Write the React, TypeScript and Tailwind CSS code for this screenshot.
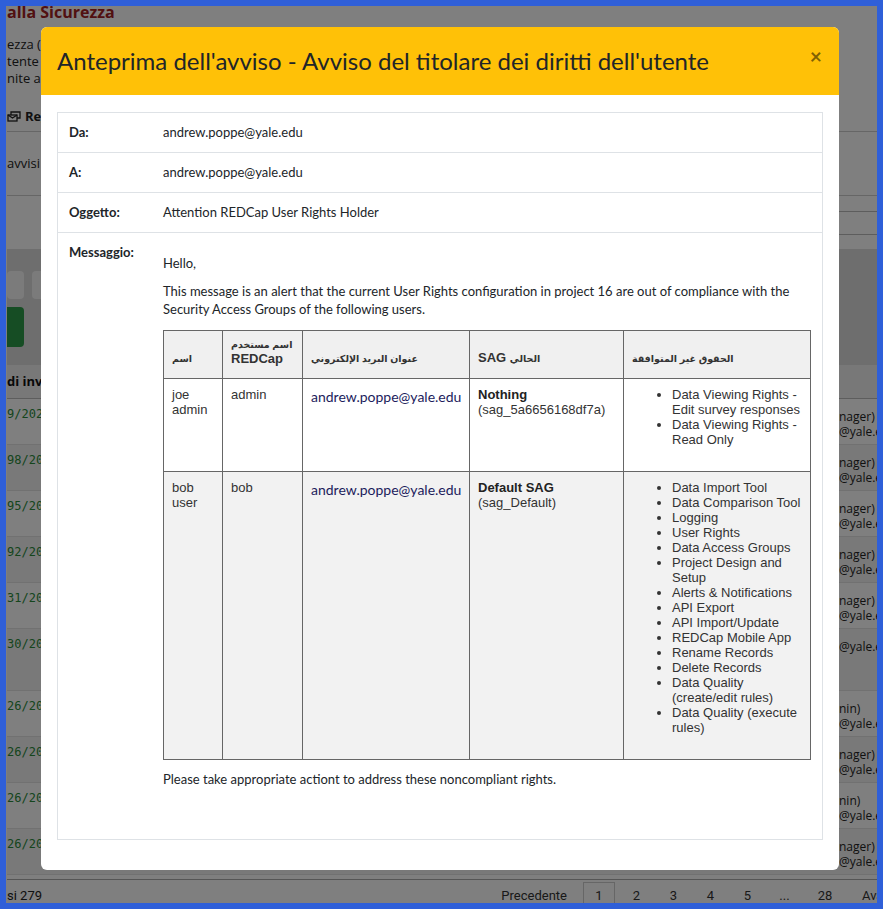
const rightsJoe = ["Data Viewing Rights - Edit survey responses", "Data Viewing Rights - Read Only"];

const rightsBob = [
  "Data Import Tool",
  "Data Comparison Tool",
  "Logging",
  "User Rights",
  "Data Access Groups",
  "Project Design and Setup",
  "Alerts & Notifications",
  "API Export",
  "API Import/Update",
  "REDCap Mobile App",
  "Rename Records",
  "Delete Records",
  "Data Quality (create/edit rules)",
  "Data Quality (execute rules)",
];

const bgRows = [
  { date: "9/2024", right: "nager)", h: "h-[46px]", tint: "bg-white" },
  { date: "98/2024", right: "nager)", h: "h-[46px]", tint: "bg-[#f2f2f2]" },
  { date: "95/2024", right: "nager)", h: "h-[46px]", tint: "bg-white" },
  { date: "92/2024", right: "nager)", h: "h-[46px]", tint: "bg-[#f2f2f2]" },
  { date: "31/2024", right: "nager)", h: "h-[46px]", tint: "bg-white" },
  { date: "30/2024", right: "", h: "h-[62px]", tint: "bg-[#f2f2f2]" },
  { date: "26/2024", right: "nin)", h: "h-[46px]", tint: "bg-white" },
  { date: "26/2024", right: "nager)", h: "h-[46px]", tint: "bg-[#f2f2f2]" },
  { date: "26/2024", right: "nin)", h: "h-[46px]", tint: "bg-white" },
  { date: "26/2024", right: "nager)", h: "h-[46px]", tint: "bg-[#f2f2f2]" },
];

function BackgroundPage() {
  return (
    <div className="flex h-full flex-col bg-white pl-px text-[13px] text-[#222] font-['Open_Sans',sans-serif]">
      <div className="-mt-[5px] h-[22px] text-[16px] font-bold leading-[22px] text-[#a32222]">alla Sicurezza</div>
      <div className="mt-[13px] leading-[17px]">
        <p>ezza (SAG) del progetto, che definiscono i privilegi massimi consentiti.</p>
        <p>tente ha diritti non conformi al proprio SAG verrà inviato un avviso</p>
        <p>nite a tutti gli amministratori del progetto.</p>
      </div>
      <div className="mt-[15px] flex h-[30px] items-center gap-1 border-b border-[#ccc] font-bold">
        <svg width="14" height="12" viewBox="0 0 14 12" fill="none" stroke="#222" strokeWidth="1.3">
          <rect x="1" y="4" width="9" height="6" />
          <path d="M1 4l4.5 3L10 4" />
          <path d="M4 4V1h9v6h-3" />
        </svg>
        <span>Registro degli avvisi</span>
      </div>
      <div className="flex h-[64px] items-center border-b border-[#ccc]">avvisi inviati</div>
      <div className="flex h-[53px] items-center justify-end">
        <div className="mr-[-4px] flex h-[24px] w-[150px] items-center rounded-sm border border-[#bbb] bg-white pl-2 text-[12px] text-[#555]">
          Cerca...
        </div>
      </div>
      <div className="flex h-[116px] flex-col gap-2 bg-[#dcdcdc] pt-[22px]">
        <div className="flex gap-2">
          <div className="h-[28px] w-[17px] rounded bg-[#f6f6f6]" />
          <div className="h-[28px] w-[60px] rounded bg-[#f6f6f6]" />
        </div>
        <div className="h-[40px] w-[17px] rounded-r bg-[#2c9a48]" />
      </div>
      <div className="flex h-[34px] items-center justify-between border-b border-[#bbb] bg-[#f0f0f0] font-bold text-[#111]">
        <span>di invio</span>
        <span />
      </div>
      {bgRows.map((r, i) => (
        <div key={i} className={`flex ${r.h} justify-between border-b border-[#e2e2e2] ${r.tint}`}>
          <span className="pt-[6px] font-['DejaVu_Sans_Mono',monospace] text-[12px] text-[#2a8a3a]">{r.date}</span>
          <span className="flex w-[38px] flex-col pt-[10px] text-[12px] leading-[15px] text-[#222]">
            <span>{r.right}</span>
            <span>@yale.edu</span>
          </span>
        </div>
      ))}
      <div className="mt-auto flex h-[24px] items-end border-t border-[#aaa] text-[13px] leading-[15px] font-['Liberation_Sans_Narrow','Roboto',sans-serif]">
        <span>si 279</span>
        <div className="ml-auto flex items-end text-[#333]">
          <span className="pr-[16px]">Precedente</span>
          <span className="mr-[3px] flex h-[21px] w-[32px] items-center justify-center border border-b-0 border-[#ccc] bg-white pt-[4px]">1</span>
          <span className="w-[37px] text-center">2</span>
          <span className="w-[37px] text-center">3</span>
          <span className="w-[37px] text-center">4</span>
          <span className="w-[37px] text-center">5</span>
          <span className="w-[37px] text-center">...</span>
          <span className="w-[44px] text-center">28</span>
          <span className="w-[30px] overflow-hidden whitespace-nowrap pl-[15px]">Avanti</span>
        </div>
      </div>
    </div>
  );
}

function InfoRow({ label, value }: { label: string; value: string }) {
  return (
    <div className="flex h-10 items-center border-b border-[#dee2e6]">
      <div className="w-[105px] pl-[11px] font-bold">{label}</div>
      <div>{value}</div>
    </div>
  );
}

function RightsList({ items }: { items: string[] }) {
  return (
    <ul className="mb-[24px] list-disc pl-10">
      {items.map((item) => (
        <li key={item}>{item}</li>
      ))}
    </ul>
  );
}

export default function App() {
  return (
    <div className="relative h-[909px] w-[883px] overflow-hidden border-[6px] border-[#2f5fd8]">
      <BackgroundPage />
      <div className="absolute inset-0 bg-black/50" />

      <div className="absolute left-[35px] top-[21px] h-[843px] w-[798px] overflow-hidden rounded-md bg-white text-[13px] text-[#212529] font-['Lato',sans-serif]">
        <div className="flex h-[68px] items-center justify-between bg-[#ffc107] pl-4 pr-[17px]">
          <h5 className="text-[24px] leading-[30px] text-[#212529]">
            Anteprima dell'avviso - Avviso del titolare dei diritti dell'utente
          </h5>
          <button className="mb-[12px] text-[21px] font-bold leading-none text-black/50">×</button>
        </div>

        <div className="px-4 pt-[17px]">
          <div className="border border-[#dee2e6]">
            <InfoRow label="Da:" value="andrew.poppe@yale.edu" />
            <InfoRow label="A:" value="andrew.poppe@yale.edu" />
            <InfoRow label="Oggetto:" value="Attention REDCap User Rights Holder" />
            <div className="flex h-[606px]">
              <div className="w-[105px] pl-[11px] pt-[10px] font-bold leading-[18px]">Messaggio:</div>
              <div className="w-[647px] pt-[21px] leading-[18px]">
                <p>Hello,</p>
                <p className="mt-[10px]">
                  This message is an alert that the current User Rights configuration in project 16 are out of compliance with the
                  Security Access Groups of the following users.
                </p>
                <table className="mt-[12px] w-[647px] table-fixed border-collapse border border-[#666] text-[13px] leading-[15px] text-[#333] font-['Liberation_Sans','DejaVu_Sans',sans-serif]">
                  <colgroup>
                    <col className="w-[59px]" />
                    <col className="w-[80px]" />
                    <col className="w-[167px]" />
                    <col className="w-[154px]" />
                    <col className="w-[187px]" />
                  </colgroup>
                  <thead>
                    <tr className="h-[48px] bg-[#f0f0f0] text-left align-bottom">
                      <th className="border border-[#666] px-2 pb-[12px] text-[9.5px] font-bold">اسم</th>
                      <th className="border border-[#666] px-2 pb-[12px] font-bold">
                        <div className="whitespace-nowrap text-[9.5px] leading-[12px]">اسم مستخدم</div>
                        <div>REDCap</div>
                      </th>
                      <th className="border border-[#666] px-2 pb-[12px] text-[9.5px] font-bold">عنوان البريد الإلكتروني</th>
                      <th className="border border-[#666] px-2 pb-[12px] font-bold">
                        SAG <span className="text-[9.5px]">الحالي</span>
                      </th>
                      <th className="border border-[#666] px-2 pb-[12px] text-[9.5px] font-bold">الحقوق غير المتوافقة</th>
                    </tr>
                  </thead>
                  <tbody>
                    <tr className="bg-white align-top">
                      <td className="border border-[#666] px-2 pt-[8px]">joe admin</td>
                      <td className="border border-[#666] px-2 pt-[8px]">admin</td>
                      <td className="border border-[#666] px-2 pt-[9px] text-[14px] leading-[17px] text-[#1c1c5c] font-['Lato',sans-serif]">
                        andrew.poppe@yale.edu
                      </td>
                      <td className="border border-[#666] px-2 pt-[8px]">
                        <div className="font-bold text-[#222]">Nothing</div>
                        <div>(sag_5a6656168df7a)</div>
                      </td>
                      <td className="border border-[#666] px-2 pt-[8px]">
                        <RightsList items={rightsJoe} />
                      </td>
                    </tr>
                    <tr className="bg-[#f2f2f2] align-top">
                      <td className="border border-[#666] px-2 pt-[8px]">bob user</td>
                      <td className="border border-[#666] px-2 pt-[8px]">bob</td>
                      <td className="border border-[#666] px-2 pt-[9px] text-[14px] leading-[17px] text-[#1c1c5c] font-['Lato',sans-serif]">
                        andrew.poppe@yale.edu
                      </td>
                      <td className="border border-[#666] px-2 pt-[8px]">
                        <div className="font-bold text-[#222]">Default SAG</div>
                        <div>(sag_Default)</div>
                      </td>
                      <td className="border border-[#666] px-2 pt-[8px]">
                        <RightsList items={rightsBob} />
                      </td>
                    </tr>
                  </tbody>
                </table>
                <p className="mt-[10px]">Please take appropriate actiont to address these noncompliant rights.</p>
              </div>
            </div>
          </div>
        </div>
      </div>
    </div>
  );
}
